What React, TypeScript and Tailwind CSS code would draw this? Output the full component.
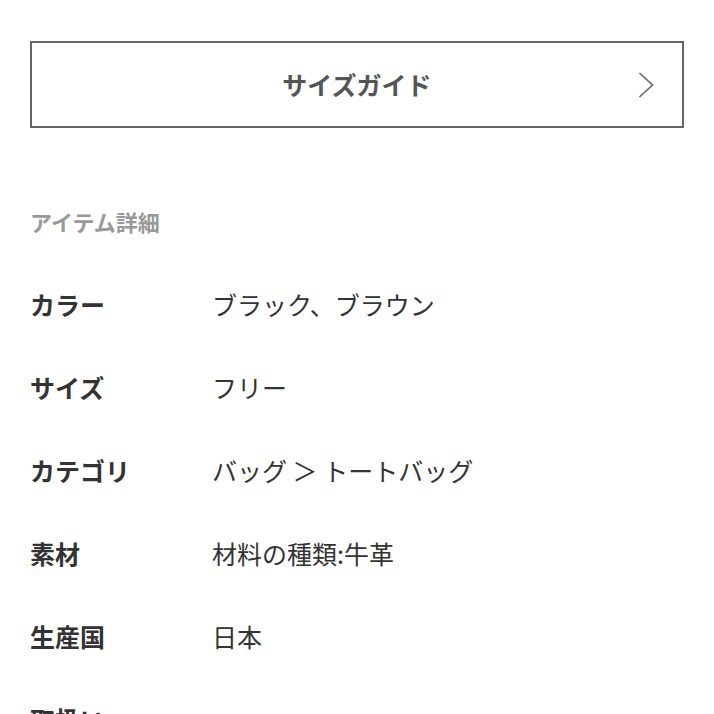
const details = [
  { label: "カラー", value: "ブラック、ブラウン" },
  { label: "サイズ", value: "フリー" },
  { label: "カテゴリ", value: "バッグ ＞ トートバッグ" },
  { label: "素材", value: "材料の種類:牛革" },
  { label: "生産国", value: "日本" },
  { label: "取扱い", value: "" },
];

export default function App() {
  return (
    <div
      className="h-[714px] w-[714px] overflow-hidden bg-white px-[30px] pt-[41px]"
      style={{ fontFamily: '"Noto Sans CJK JP", "Noto Sans", sans-serif' }}
    >
      {/* Size guide */}
      <button className="relative flex h-[87px] w-full items-center justify-center border-2 border-[#666] bg-white">
        <span className="text-[25px] font-bold text-[#555]">サイズガイド</span>
        <svg
          className="absolute right-[28px] top-1/2 h-[26px] w-[16px] -translate-y-1/2"
          viewBox="0 0 16 26"
          fill="none"
          stroke="#666"
          strokeWidth={1.6}
        >
          <polyline points="1.5,1 14.5,13 1.5,25" />
        </svg>
      </button>

      {/* Item details */}
      <h2 className="mt-[77px] h-[32px] text-[22px] font-bold leading-[32px] text-[#999]">
        アイテム詳細
      </h2>

      <dl className="mt-[26px]">
        {details.map((d) => (
          <div key={d.label} className="flex h-[83px] items-center">
            <dt className="w-[182px] text-[25px] font-bold text-[#333]">
              {d.label}
            </dt>
            <dd className="text-[25px] text-[#333]">{d.value}</dd>
          </div>
        ))}
      </dl>
    </div>
  );
}
